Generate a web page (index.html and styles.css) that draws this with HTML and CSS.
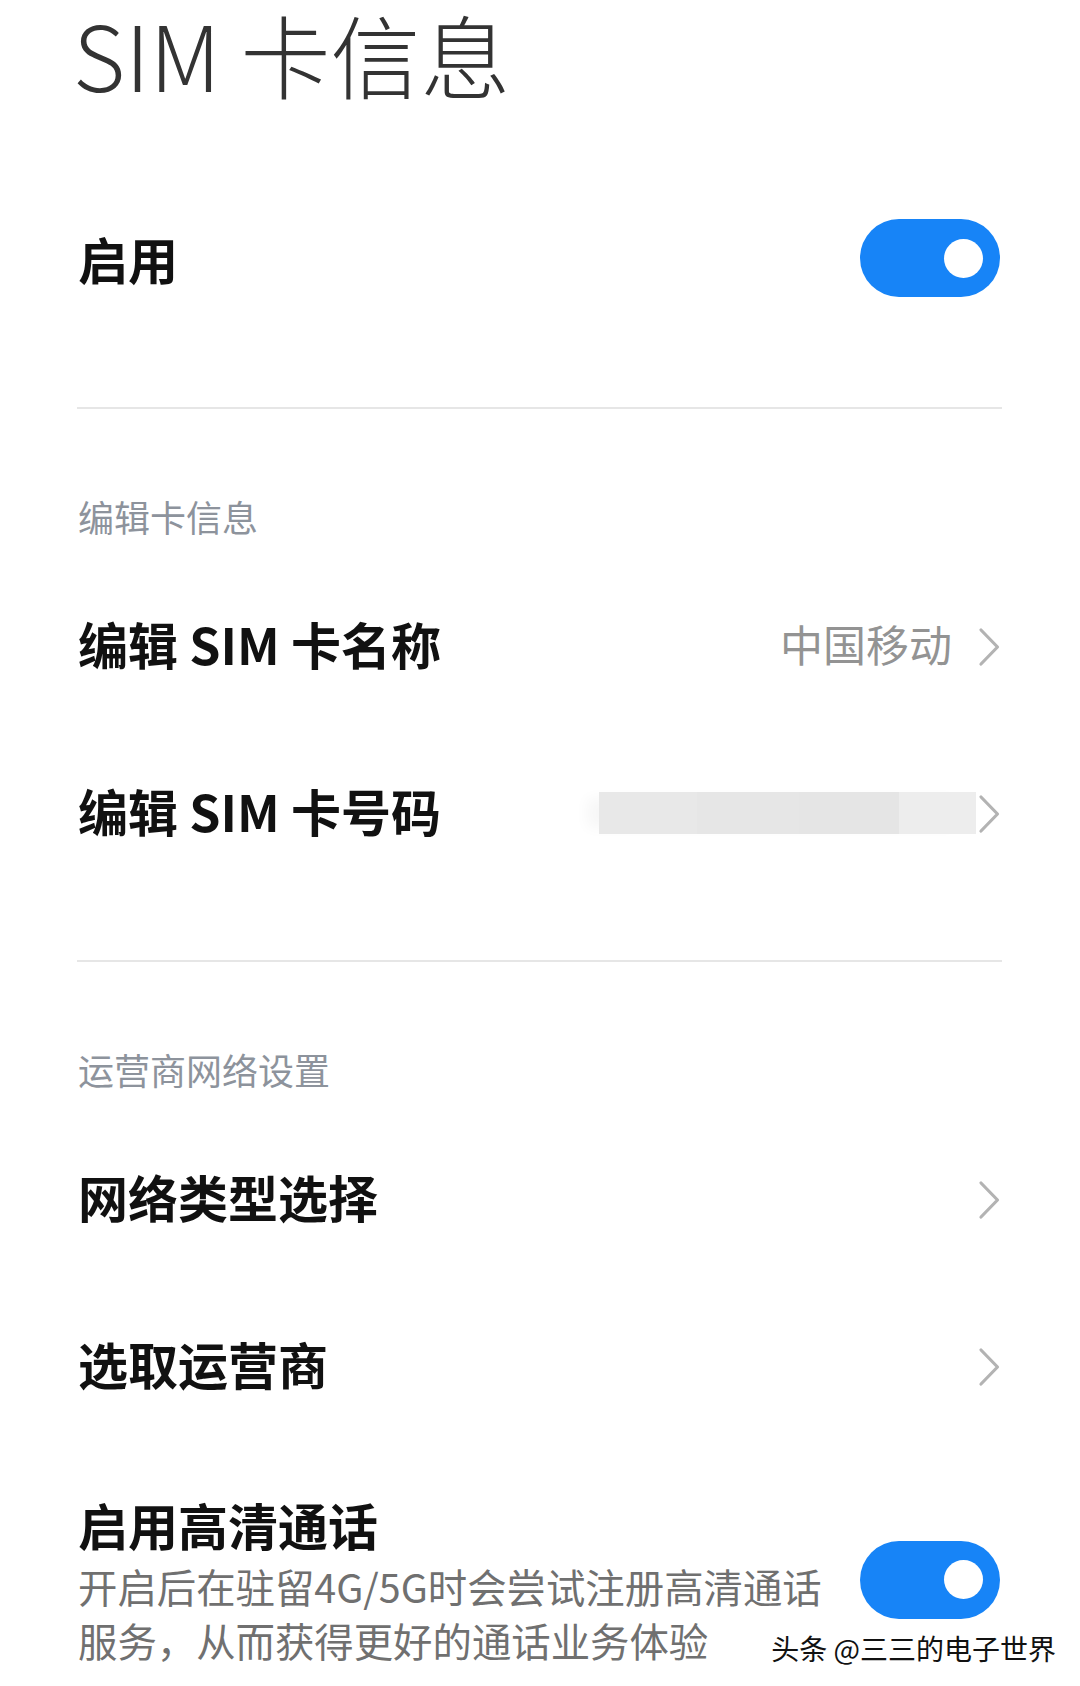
FILE: index.html
```html
<!DOCTYPE html>
<html lang="zh-CN">
<head>
<meta charset="utf-8">
<title>SIM 卡信息</title>
<link rel="stylesheet" href="styles.css">
</head>
<body>
<div class="page">
  <h1 class="title">SIM 卡信息</h1>

  <div class="row switch-row">
    <span class="label">启用</span>
    <span class="toggle"><span class="knob"></span></span>
  </div>

  <div class="divider divider-1"></div>

  <div class="section-head">编辑卡信息</div>

  <div class="row first">
    <span class="label">编辑 SIM 卡名称</span>
    <span class="right">
      <span class="value">中国移动</span>
      <svg class="chev" width="22" height="40" viewBox="0 0 22 40"><polyline points="3,3 19.5,20 3,37" fill="none" stroke="#b3b3b3" stroke-width="3.2" stroke-linecap="round" stroke-linejoin="round"/></svg>
    </span>
  </div>

  <div class="row">
    <span class="label">编辑 SIM 卡号码</span>
    <span class="right">
      <span class="blur"><span class="seg s1"></span><span class="seg s2"></span><span class="seg s3"></span><span class="seg s4"></span></span>
      <svg class="chev" width="22" height="40" viewBox="0 0 22 40"><polyline points="3,3 19.5,20 3,37" fill="none" stroke="#b3b3b3" stroke-width="3.2" stroke-linecap="round" stroke-linejoin="round"/></svg>
    </span>
  </div>

  <div class="divider divider-2"></div>

  <div class="section-head">运营商网络设置</div>

  <div class="row first">
    <span class="label">网络类型选择</span>
    <span class="right">
      <svg class="chev" width="22" height="40" viewBox="0 0 22 40"><polyline points="3,3 19.5,20 3,37" fill="none" stroke="#b3b3b3" stroke-width="3.2" stroke-linecap="round" stroke-linejoin="round"/></svg>
    </span>
  </div>

  <div class="row">
    <span class="label">选取运营商</span>
    <span class="right">
      <svg class="chev" width="22" height="40" viewBox="0 0 22 40"><polyline points="3,3 19.5,20 3,37" fill="none" stroke="#b3b3b3" stroke-width="3.2" stroke-linecap="round" stroke-linejoin="round"/></svg>
    </span>
  </div>

  <div class="hd-row">
    <div class="hd-text">
      <div class="label hd-label">启用高清通话</div>
      <div class="desc">
        <span class="desc-line">开启后在驻留4G/5G时会尝试注册高清通话</span>
        <span class="desc-line">服务，从而获得更好的通话业务体验</span>
      </div>
    </div>
    <span class="toggle"><span class="knob"></span></span>
  </div>
</div>
<div class="watermark">头条 @三三的电子世界</div>
</body>
</html>
```

FILE: styles.css
```css
html, body {
  margin: 0;
  padding: 0;
  background: #ffffff;
}
body {
  position: relative;
  width: 1080px;
  height: 1686px;
  overflow: hidden;
  font-family: "Noto Sans CJK SC", "Noto Sans", sans-serif;
  color: #111111;
}
.page {
  padding: 0 80px 0 78px;
}
.title {
  margin: 0 0 0 -5px;
  font-family: "Noto Sans CJK SC", sans-serif;
  font-size: 90px;
  line-height: 106px;
  font-weight: 300;
  color: #333333;
  letter-spacing: 0;
}
.row {
  display: flex;
  align-items: center;
  justify-content: space-between;
  height: 167px;
}
.switch-row {
  margin-top: 68px;
  height: 168px;
}
.label {
  font-size: 50px;
  line-height: 64px;
  font-weight: 700;
  color: #111111;
  white-space: nowrap;
}
.toggle {
  position: relative;
  flex: none;
  width: 140px;
  height: 78px;
  border-radius: 39px;
  background: #1784f7;
}
.knob {
  position: absolute;
  right: 17px;
  top: 19.5px;
  width: 39px;
  height: 39px;
  border-radius: 50%;
  background: #ffffff;
}
.divider {
  height: 2px;
  background: #e6e6e6;
  margin-left: -1px;
  margin-right: -2px;
}
.divider-1 {
  margin-top: 65px;
}
.divider-2 {
  margin-top: 67px;
}
.section-head {
  margin-top: 89px;
  font-size: 36px;
  line-height: 36px;
  color: #8d939c;
  margin-bottom: 25px;
}
.right {
  display: flex;
  align-items: center;
}
.value {
  font-size: 43px;
  line-height: 50px;
  color: #939393;
  margin-right: 26px;
}
.chev {
  display: block;
  flex: none;
  margin-top: 8px;
}
.blur {
  display: flex;
  width: 377px;
  height: 42px;
  margin-right: 2px;
  margin-top: 6px;
  box-shadow: -18px 0 14px -6px #f7f7f7;
}
.seg { display: block; height: 100%; }
.s1 { width: 98px; background: #e8e8e8; }
.s2 { width: 102px; background: #e6e6e6; }
.s3 { width: 100px; background: #e5e5e5; }
.s4 { width: 77px; background: #ededed; }
.hd-row {
  display: flex;
  align-items: center;
  justify-content: space-between;
  margin-top: 46px;
}
.hd-text {
  display: flex;
  flex-direction: column;
  align-items: flex-start;
}
.hd-label {
  line-height: 64px;
}
.desc {
  margin-top: 3px;
  display: flex;
  flex-direction: column;
  align-items: flex-start;
  font-size: 39.4px;
  line-height: 54px;
  color: #707070;
}
.desc-line {
  display: block;
  white-space: nowrap;
}
.watermark {
  position: absolute;
  right: 24px;
  top: 1628px;
  font-family: "Noto Sans CJK SC", sans-serif;
  font-size: 28px;
  line-height: 40px;
  color: #111111;
  text-shadow: 0 0 2px #ffffff, 1px 1px 0 #ffffff, -1px -1px 0 #ffffff;
}
```
